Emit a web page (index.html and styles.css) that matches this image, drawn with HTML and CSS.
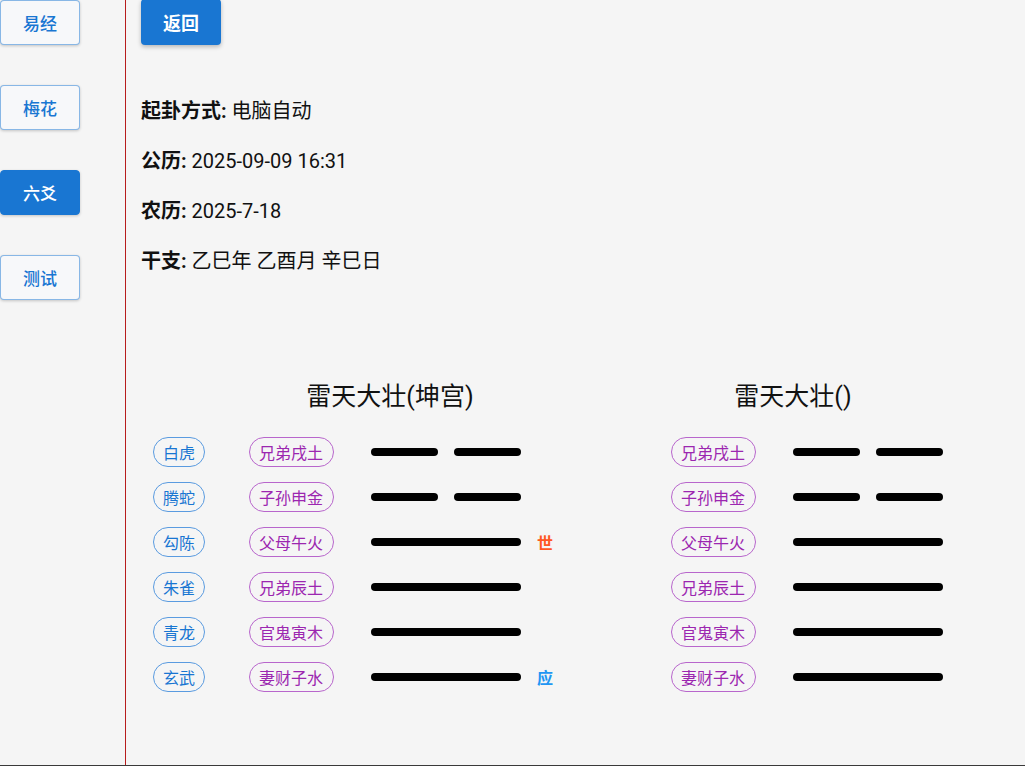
FILE: index.html
```html
<!DOCTYPE html>
<html lang="zh">
<head>
<meta charset="utf-8">
<link rel="stylesheet" href="styles.css">
</head>
<body>
<div class="app">
  <nav class="sidebar">
    <button class="nav-btn">易经</button>
    <button class="nav-btn">梅花</button>
    <button class="nav-btn active">六爻</button>
    <button class="nav-btn">测试</button>
  </nav>
  <main class="main">
    <button class="back-btn">返回</button>
    <div class="info">
      <p><b>起卦方式:</b> 电脑自动</p>
      <p><b>公历:</b> 2025-09-09 16:31</p>
      <p><b>农历:</b> 2025-7-18</p>
      <p><b>干支:</b> 乙巳年 乙酉月 辛巳日</p>
    </div>
    <div class="guas">
      <section class="gua gua-main">
        <h2 class="gua-title">雷天大壮(坤宫)</h2>
        <div class="rows">
          <div class="row"><span class="pill shen">白虎</span><span class="pill qin">兄弟戌土</span><span class="yao broken"><i></i><i></i></span></div>
          <div class="row"><span class="pill shen">腾蛇</span><span class="pill qin">子孙申金</span><span class="yao broken"><i></i><i></i></span></div>
          <div class="row"><span class="pill shen">勾陈</span><span class="pill qin">父母午火</span><span class="yao solid"><i></i></span><span class="mark shi">世</span></div>
          <div class="row"><span class="pill shen">朱雀</span><span class="pill qin">兄弟辰土</span><span class="yao solid"><i></i></span></div>
          <div class="row"><span class="pill shen">青龙</span><span class="pill qin">官鬼寅木</span><span class="yao solid"><i></i></span></div>
          <div class="row"><span class="pill shen">玄武</span><span class="pill qin">妻财子水</span><span class="yao solid"><i></i></span><span class="mark ying">应</span></div>
        </div>
      </section>
      <section class="gua gua-change">
        <h2 class="gua-title">雷天大壮()</h2>
        <div class="rows">
          <div class="row"><span class="pill qin">兄弟戌土</span><span class="yao broken"><i></i><i></i></span></div>
          <div class="row"><span class="pill qin">子孙申金</span><span class="yao broken"><i></i><i></i></span></div>
          <div class="row"><span class="pill qin">父母午火</span><span class="yao solid"><i></i></span></div>
          <div class="row"><span class="pill qin">兄弟辰土</span><span class="yao solid"><i></i></span></div>
          <div class="row"><span class="pill qin">官鬼寅木</span><span class="yao solid"><i></i></span></div>
          <div class="row"><span class="pill qin">妻财子水</span><span class="yao solid"><i></i></span></div>
        </div>
      </section>
    </div>
  </main>
</div>
</body>
</html>
```
FILE: styles.css
```css
html, body {
  margin: 0;
  padding: 0;
  background: #f5f5f5;
  font-family: Roboto, "Noto Sans CJK SC", sans-serif;
  color: #111;
}
.app {
  display: flex;
  height: 766px;
  box-sizing: border-box;
  border-bottom: 1px solid #3a3a3a;
  overflow: hidden;
}
.sidebar {
  width: 125px;
  flex: none;
  border-right: 1px solid #b71c1c;
  display: flex;
  flex-direction: column;
  align-items: flex-start;
  gap: 40px;
}
.nav-btn {
  width: 80px;
  height: 45px;
  box-sizing: border-box;
  border: 1px solid rgba(25, 118, 210, 0.5);
  border-radius: 4px;
  background: #f7f8fa;
  color: #1976d2;
  font-family: Roboto, "Noto Sans CJK SC", sans-serif;
  font-size: 17px;
  font-weight: 500;
  box-shadow: 0 1px 3px rgba(0, 0, 0, 0.2);
  padding: 0;
}
.nav-btn.active {
  background: #1976d2;
  border-color: #1976d2;
  color: #fff;
}
.main {
  flex: 1;
  padding-left: 15px;
  min-width: 0;
}
.back-btn {
  display: block;
  width: 80px;
  height: 46px;
  border: none;
  border-radius: 4px;
  background: #1976d2;
  color: #fff;
  font-family: Roboto, "Noto Sans CJK SC", sans-serif;
  font-size: 18px;
  font-weight: 700;
  box-shadow: 0 2px 4px rgba(0, 0, 0, 0.25);
  padding: 0;
  margin-top: -1px;
}
.info {
  margin-top: 51px;
  display: flex;
  flex-direction: column;
  gap: 20px;
}
.info p {
  margin: 0;
  font-size: 20px;
  line-height: 30px;
}
.info b {
  font-weight: 700;
}
.guas {
  display: flex;
  margin-top: 103px;
}
.gua-main {
  width: 518px;
}
.gua-title {
  margin: 0;
  font-size: 25px;
  font-weight: 400;
  line-height: 36px;
  text-align: center;
}
.gua-main .gua-title {
  width: 498px;
}
.gua-change .gua-title {
  width: 268px;
}
.rows {
  margin-top: 22px;
  padding-left: 12px;
  display: flex;
  flex-direction: column;
  gap: 15px;
}
.row {
  display: flex;
  align-items: center;
  height: 30px;
}
.pill {
  box-sizing: border-box;
  height: 30px;
  line-height: 28px;
  padding: 0 9px;
  border-radius: 15px;
  font-size: 16px;
  font-family: "Noto Sans CJK SC", sans-serif;
}
.shen {
  width: 52px;
  border: 1px solid #5a9be0;
  color: #1976d2;
  margin-right: 44px;
}
.qin {
  width: 85px;
  border: 1px solid #b866cc;
  color: #9c27b0;
  margin-right: 37px;
}
.yao {
  width: 150px;
  height: 8px;
  display: flex;
  justify-content: space-between;
}
.yao i {
  display: block;
  height: 8px;
  background: #000;
  border-radius: 4px;
}
.yao.solid i {
  width: 150px;
}
.yao.broken i {
  width: 67px;
}
.mark {
  margin-left: 16px;
  font-size: 16px;
  font-weight: 700;
  font-family: "Noto Sans CJK SC", sans-serif;
}
.shi {
  color: #ff5722;
}
.ying {
  color: #2196f3;
}
```
